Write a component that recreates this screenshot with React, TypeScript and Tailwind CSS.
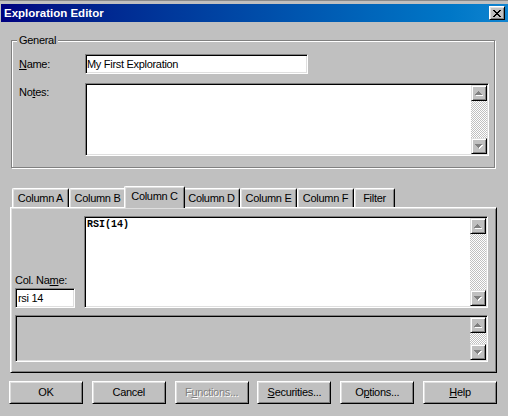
import React from "react";

const sunken =
  "border border-t-[#808080] border-l-[#808080] border-r-white border-b-white shadow-[inset_1px_1px_0_#000,inset_-1px_-1px_0_#dfdfdf]";
const raised =
  "border border-t-white border-l-white border-r-black border-b-black shadow-[inset_1px_1px_0_#dfdfdf,inset_-1px_-1px_0_#808080]";

function Arrow({ dir }: { dir: "up" | "down" }) {
  const d =
    dir === "up"
      ? "M3 0h1v1h1v1h1v1h1v1H0v-1h1v-1h1v-1h1z"
      : "M0 0h7v1h-1v1h-1v1h-1v1h-1v-1h-1v-1h-1v-1H0z";
  return (
    <svg width="8" height="5" viewBox="0 0 8 5" shapeRendering="crispEdges">
      <path d={d} fill="#ffffff" transform="translate(1 1)" />
      <path d={d} fill="#808080" />
    </svg>
  );
}

function ScrollBtn({ dir }: { dir: "up" | "down" }) {
  return (
    <div className="w-[16px] h-[16px] shrink-0 bg-[#c0c0c0] border border-t-[#dfdfdf] border-l-[#dfdfdf] border-r-black border-b-black shadow-[inset_1px_1px_0_#fff,inset_-1px_-1px_0_#808080] flex items-center justify-center">
      <Arrow dir={dir} />
    </div>
  );
}

function ScrollBar() {
  return (
    <div className="w-[16px] self-stretch flex flex-col">
      <ScrollBtn dir="up" />
      <div className="flex-1 bg-[repeating-conic-gradient(#ffffff_0_25%,#c0c0c0_0_50%)] bg-[length:2px_2px]" />
      <ScrollBtn dir="down" />
    </div>
  );
}

function CloseGlyph() {
  const px: [number, number][] = [
    [0, 0], [1, 0], [6, 0], [7, 0],
    [1, 1], [2, 1], [5, 1], [6, 1],
    [2, 2], [3, 2], [4, 2], [5, 2],
    [3, 3], [4, 3],
    [2, 4], [3, 4], [4, 4], [5, 4],
    [1, 5], [2, 5], [5, 5], [6, 5],
    [0, 6], [1, 6], [6, 6], [7, 6],
  ];
  return (
    <svg width="8" height="7" viewBox="0 0 8 7" shapeRendering="crispEdges">
      {px.map(([x, y], i) => (
        <rect key={i} x={x} y={y} width="1" height="1" fill="#000" />
      ))}
    </svg>
  );
}

function Tab({ label, active }: { label: string; active?: boolean }) {
  if (active) {
    return (
      <div className="relative z-10 -mx-[2px] -mb-[1px] w-[61px] h-[22px] pb-[2px] bg-[#c0c0c0] rounded-t-[2px] border-l border-t border-r border-l-white border-t-white border-r-black shadow-[inset_1px_1px_0_#dfdfdf,inset_-1px_0_0_#808080] flex items-center justify-center">
        {label}
      </div>
    );
  }
  return (
    <div className="w-[57px] h-[19px] bg-[#c0c0c0] rounded-t-[2px] border-l border-t border-r border-l-white border-t-white border-r-black shadow-[inset_1px_1px_0_#dfdfdf,inset_-1px_0_0_#808080] flex items-center justify-center">
      {label}
    </div>
  );
}

function Button({
  children,
  disabled,
}: {
  children: React.ReactNode;
  disabled?: boolean;
}) {
  return (
    <div
      className={
        raised +
        " w-[74px] h-[23px] bg-[#c0c0c0] flex items-center justify-center " +
        (disabled ? "text-[#808080] [text-shadow:1px_1px_0_#fff]" : "text-black")
      }
    >
      <span>{children}</span>
    </div>
  );
}

export default function App() {
  return (
    <div className="w-[508px] h-[416px] bg-[#c0c0c0] overflow-hidden font-['Liberation_Sans',Arial,sans-serif] text-[11px] tracking-[-0.3px] text-black flex flex-col">
      <div className="h-px bg-[#8a8a8a] shrink-0" />
      <div className="h-[3px] shrink-0" />
      {/* Title bar */}
      <div className="ml-px w-[507px] h-[18px] shrink-0 bg-linear-to-r from-[#000080] to-[#1084d0] flex items-center justify-between pl-[3px] pr-[3px]">
        <span className="text-white font-bold text-[11.5px] tracking-normal leading-[14px]">
          Exploration Editor
        </span>
        <div className={raised + " w-[16px] h-[14px] bg-[#c0c0c0] flex items-center justify-center"}>
          <CloseGlyph />
        </div>
      </div>

      {/* General group */}
      <div className="relative mt-[18px] ml-[11px] w-[484px] h-[128px] shrink-0 border border-[#808080] shadow-[inset_1px_1px_0_#fff,1px_1px_0_#fff] pt-[13px] pl-[7px]">
        <span className="absolute -top-[8px] left-[5px] px-[2px] bg-[#c0c0c0] leading-[14px]">
          General
        </span>
        <div className="flex items-center">
          <span className="w-[66px] leading-[14px]">
            <u>N</u>ame:
          </span>
          <div className={sunken + " w-[223px] h-[20px] bg-white pl-[1px] flex items-center leading-[14px]"}>
            My First Exploration
          </div>
        </div>
        <div className="flex items-start mt-[9px]">
          <span className="w-[66px] pt-[2px] leading-[14px]">
            No<u>t</u>es:
          </span>
          <div className={sunken + " w-[404px] h-[73px] bg-white p-[1px] flex justify-end"}>
            <ScrollBar />
          </div>
        </div>
      </div>

      {/* Tabs */}
      <div className="ml-[10px] mt-[18px] flex flex-col shrink-0">
        <div className="h-[21px] pl-[2px] flex items-end">
          <Tab label="Column A" />
          <Tab label="Column B" />
          <Tab label="Column C" active />
          <Tab label="Column D" />
          <Tab label="Column E" />
          <Tab label="Column F" />
          <div className="w-[41px] h-[19px] bg-[#c0c0c0] rounded-t-[2px] border-l border-t border-r border-l-white border-t-white border-r-black shadow-[inset_1px_1px_0_#dfdfdf,inset_-1px_0_0_#808080] flex items-center justify-center">
            Filter
          </div>
        </div>
        <div className={raised + " w-[487px] h-[166px] bg-[#c0c0c0] pt-[8px] pl-[4px] flex flex-col"}>
          <div className="flex items-end">
            <div className="w-[60px] flex flex-col">
              <span className="leading-[14px] mb-[1px]">
                Col. Na<u>m</u>e:
              </span>
              <div className={sunken + " h-[20px] bg-white pl-[2px] flex items-center leading-[14px]"}>
                rsi 14
              </div>
            </div>
            <div className={sunken + " ml-[9px] w-[404px] h-[92px] bg-white p-[1px] flex"}>
              <div className="flex-1 font-['Liberation_Mono','Courier_New',monospace] text-[10px] font-bold tracking-normal leading-[12px] pl-[1px] pt-[1px]">
                RSI(14)
              </div>
              <ScrollBar />
            </div>
          </div>
          <div className={sunken + " mt-[7px] w-[473px] h-[47px] bg-[#c0c0c0] p-[1px] flex justify-end"}>
            <ScrollBar />
          </div>
        </div>
      </div>

      {/* Buttons */}
      <div className="ml-[9px] mt-[8px] w-[488px] flex justify-between shrink-0">
        <Button>OK</Button>
        <Button>Cancel</Button>
        <Button disabled>
          F<u>u</u>nctions...
        </Button>
        <Button>
          <u>S</u>ecurities...
        </Button>
        <Button>
          O<u>p</u>tions...
        </Button>
        <Button>
          <u>H</u>elp
        </Button>
      </div>
    </div>
  );
}
